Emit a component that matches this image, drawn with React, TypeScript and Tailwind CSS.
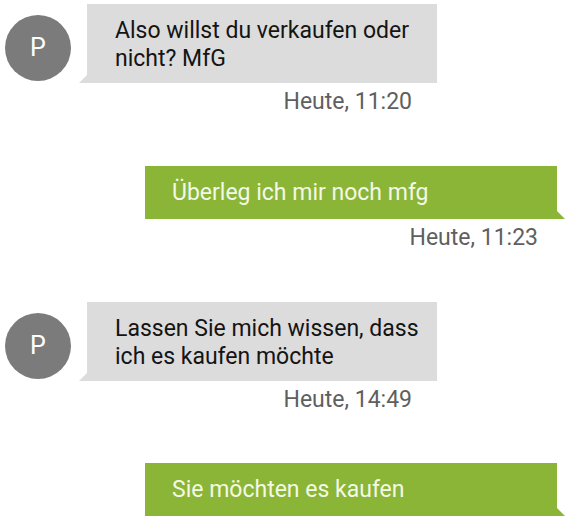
import React from 'react';

const Avatar = () => (
  <div className="w-[66px] h-[66px] rounded-full bg-[#7b7b7b] flex items-center justify-center text-white text-[25px] shrink-0">
    P
  </div>
);

const Incoming = ({ lines, time, className = '' }: { lines: string[]; time: string; className?: string }) => (
  <div className={`flex items-start pl-[5px] ${className}`}>
    <div className="mt-[11px]">
      <Avatar />
    </div>
    <div className="ml-[16px] w-[350px]">
      <div className="relative bg-[#dcdcdc] h-[79px] pl-[28px] pt-[13px] text-[23px] leading-[28px] text-[#141414]">
        {lines.map((l) => (
          <div key={l}>{l}</div>
        ))}
        {/* tail */}
        <div className="absolute left-[-8px] bottom-0 w-0 h-0 border-b-[8px] border-b-[#dcdcdc] border-l-[8px] border-l-transparent" />
      </div>
      <div className="mt-[5px] pr-[25px] text-right text-[23px] leading-[28px] text-[#5f5f5f]">{time}</div>
    </div>
  </div>
);

const Outgoing = ({ text, time, className = '' }: { text: string; time?: string; className?: string }) => (
  <div className={`ml-[145px] w-[412px] ${className}`}>
    <div className="relative bg-[#8ab536] h-[53px] pl-[27px] flex items-center text-[23px] leading-[28px] text-[#f4f8e6]">
      {text}
      <div className="absolute right-[-8px] bottom-0 w-0 h-0 border-b-[8px] border-b-[#8ab536] border-r-[8px] border-r-transparent" />
    </div>
    {time && <div className="mt-[5px] pr-[19px] text-right text-[23px] leading-[28px] text-[#5f5f5f]">{time}</div>}
  </div>
);

export default function App() {
  return (
    <div className="w-[582px] h-[522px] bg-white overflow-hidden pt-[4px]" style={{ fontFamily: 'Roboto, "Noto Sans", sans-serif' }}>
      <Incoming lines={['Also willst du verkaufen oder', 'nicht? MfG']} time="Heute, 11:20" />
      <Outgoing text="Überleg ich mir noch mfg" time="Heute, 11:23" className="mt-[50px]" />
      <Incoming lines={['Lassen Sie mich wissen, dass', 'ich es kaufen möchte']} time="Heute, 14:49" className="mt-[50px]" />
      <Outgoing text="Sie möchten es kaufen" className="mt-[49px]" />
    </div>
  );
}
